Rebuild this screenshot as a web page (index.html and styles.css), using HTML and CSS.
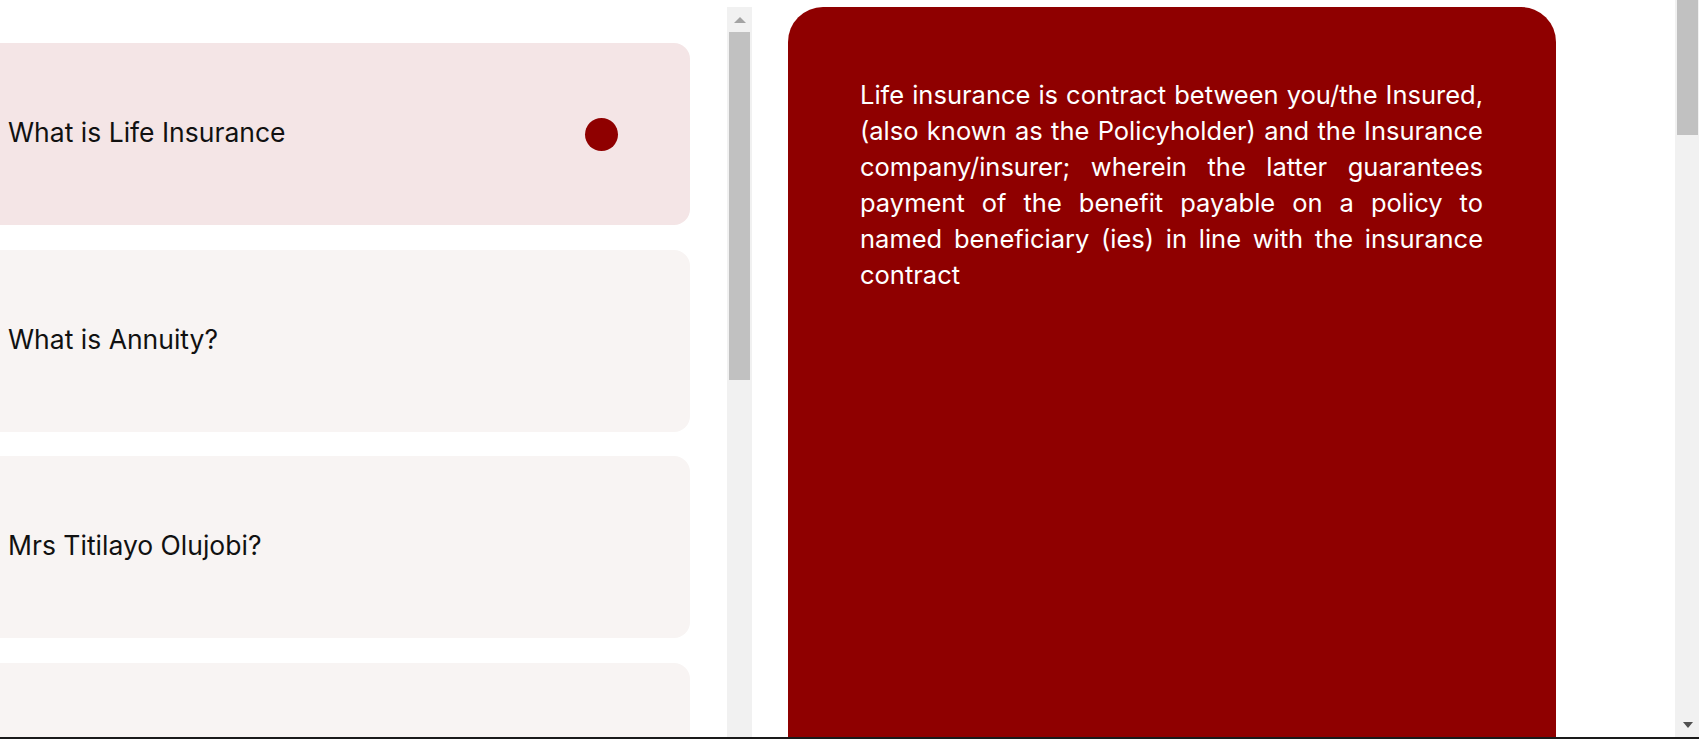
FILE: index.html
```html
<!DOCTYPE html>
<html lang="en">
<head>
<meta charset="utf-8">
<title>FAQ</title>
<link rel="stylesheet" href="styles.css">
</head>
<body>
<div class="main">
  <div class="left-wrap">
    <div class="faq-list">
      <div class="faq-card active">
        <span class="faq-title">What is Life Insurance</span>
        <span class="dot"></span>
      </div>
      <div class="faq-card">
        <span class="faq-title">What is Annuity?</span>
      </div>
      <div class="faq-card">
        <span class="faq-title">Mrs Titilayo Olujobi?</span>
      </div>
      <div class="faq-card">
        <span class="faq-title"></span>
      </div>
    </div>
    <div class="scrollbar inner">
      <div class="sb-btn"><span class="tri-up"></span></div>
      <div class="sb-thumb inner-thumb"></div>
    </div>
  </div>
  <div class="answer-panel">
    <p class="answer-text">Life insurance is contract between you/the Insured, (also known as the Policyholder) and the Insurance company/insurer; wherein the latter guarantees payment of the benefit payable on a policy to named beneficiary (ies) in line with the insurance contract</p>
  </div>
  <div class="spacer"></div>
  <div class="scrollbar page">
    <div class="sb-thumb page-thumb"></div>
    <div class="sb-fill"></div>
    <div class="sb-btn down"><span class="tri-down"></span></div>
  </div>
</div>
<div class="bottom-line"></div>
</body>
</html>
```
FILE: styles.css
```css
html, body {
  margin: 0;
  padding: 0;
  height: 739px;
  overflow: hidden;
  background: #ffffff;
}
body {
  display: flex;
  flex-direction: column;
  font-family: "Inter", "Noto Sans", sans-serif;
}
.main {
  height: 737px;
  display: flex;
  flex-direction: row;
  overflow: hidden;
}
.left-wrap {
  width: 752px;
  margin-top: 7px;
  display: flex;
  flex-direction: row;
  overflow: hidden;
}
.faq-list {
  width: 727px;
  padding-top: 36px;
  display: flex;
  flex-direction: column;
  gap: 24.5px;
  overflow: hidden;
}
.faq-card {
  flex: 0 0 182px;
  margin-left: -40px;
  width: 730px;
  box-sizing: border-box;
  padding: 0 72px 0 48px;
  border-radius: 16px;
  background: #f8f4f3;
  display: flex;
  align-items: center;
  justify-content: space-between;
}
.faq-card.active {
  background: #f4e5e6;
}
.faq-title {
  font-size: 26.5px;
  color: #111111;
  margin-top: -4px;
}
.dot {
  width: 33px;
  height: 33px;
  border-radius: 50%;
  background: #8f0000;
}
.scrollbar {
  width: 25px;
  box-sizing: border-box;
  background: #f1f1f1;
  display: flex;
  flex-direction: column;
  padding: 0 2px;
}
.scrollbar.page {
  width: 24px;
  padding: 0 1px 0 2px;
}
.sb-btn {
  height: 25px;
  flex: 0 0 25px;
  display: flex;
  align-items: center;
  justify-content: center;
}
.sb-btn.down {
  flex: 0 0 24px;
  align-items: flex-start;
}
.tri-up {
  width: 0;
  height: 0;
  border-left: 6.5px solid transparent;
  border-right: 6.5px solid transparent;
  border-bottom: 6px solid #a3a3a3;
  margin-top: 1px;
}
.tri-down {
  width: 0;
  height: 0;
  border-left: 5.5px solid transparent;
  border-right: 5.5px solid transparent;
  border-top: 6px solid #505050;
  margin-top: 9px;
}
.sb-thumb {
  background: #c1c1c1;
}
.inner-thumb {
  height: 348px;
}
.page-thumb {
  height: 135px;
}
.sb-fill {
  flex: 1;
}
.answer-panel {
  width: 768px;
  margin-left: 36px;
  margin-top: 7px;
  box-sizing: border-box;
  padding: 70px 73px 0 72px;
  background: #8f0000;
  border-radius: 35px 35px 0 0;
}
.answer-text {
  margin: 0;
  color: #ffffff;
  font-size: 25.5px;
  line-height: 36px;
  text-align: justify;
}
.spacer {
  flex: 1;
}
.bottom-line {
  height: 2px;
  background: #1a1a1a;
}
```
